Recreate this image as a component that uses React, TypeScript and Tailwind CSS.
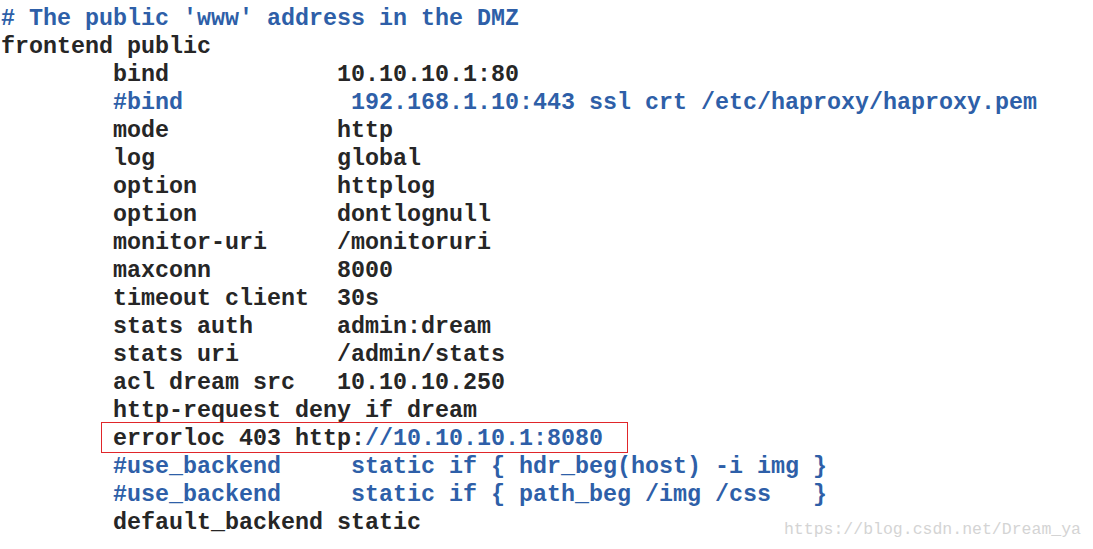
const B = "text-[#2e5fa8]";
const K = "text-[#262626]";

type Seg = { t: string; c: string };
const line = (t: string, c = K): Seg[] => [{ t, c }];

const lines: Seg[][] = [
  line("# The public 'www' address in the DMZ", B),
  line("frontend public"),
  line("        bind            10.10.10.1:80"),
  line("        #bind            192.168.1.10:443 ssl crt /etc/haproxy/haproxy.pem", B),
  line("        mode            http"),
  line("        log             global"),
  line("        option          httplog"),
  line("        option          dontlognull"),
  line("        monitor-uri     /monitoruri"),
  line("        maxconn         8000"),
  line("        timeout client  30s"),
  line("        stats auth      admin:dream"),
  line("        stats uri       /admin/stats"),
  line("        acl dream src   10.10.10.250"),
  line("        http-request deny if dream"),
  [
    { t: "        errorloc 403 http:", c: K },
    { t: "//10.10.10.1:8080", c: B },
  ],
  line("        #use_backend     static if { hdr_beg(host) -i img }", B),
  line("        #use_backend     static if { path_beg /img /css   }", B),
  line("        default_backend static"),
];

export default function App() {
  return (
    <div className="relative h-[549px] w-[1093px] overflow-hidden bg-white">
      <div className="pl-[1px] pt-[5px] font-['Liberation_Mono',monospace] text-[23.33px] font-bold leading-[28px] whitespace-pre">
        {lines.map((segs, i) => (
          <div key={i} className="relative h-[28px]">
            {segs.map((s, j) => (
              <span key={j} className={s.c}>
                {s.t}
              </span>
            ))}
            {i === 15 && (
              <span className="absolute left-[100px] top-[-3px] h-[31px] w-[527px] border border-[#e0262a]" />
            )}
          </div>
        ))}
      </div>
      <div className="absolute right-[12px] bottom-[9px] font-['Liberation_Mono',monospace] text-[16.5px] leading-[20px] text-[#d4d4d4]">
        https://blog.csdn.net/Dream_ya
      </div>
    </div>
  );
}
